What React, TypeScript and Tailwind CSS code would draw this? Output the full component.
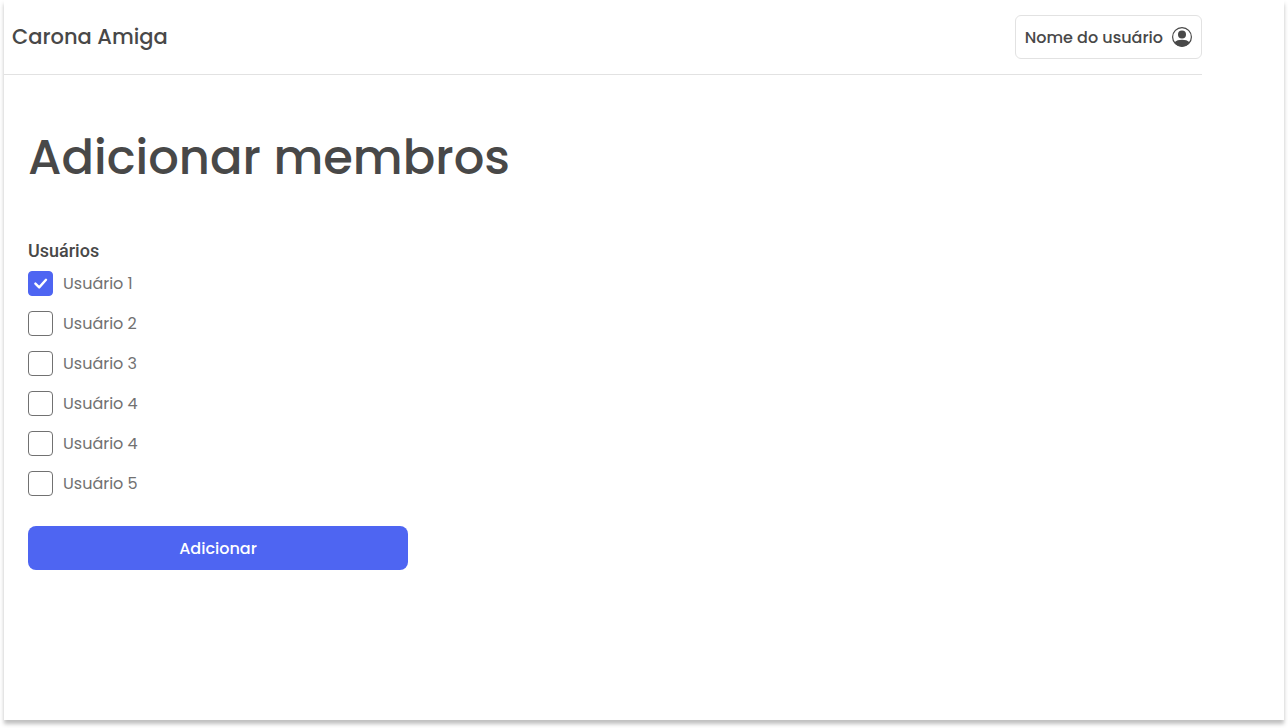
import { useState } from 'react';

const initialUsers = [
  { id: 'u1', name: 'Usuário 1', selected: true },
  { id: 'u2', name: 'Usuário 2', selected: false },
  { id: 'u3', name: 'Usuário 3', selected: false },
  { id: 'u4', name: 'Usuário 4', selected: false },
  { id: 'u5', name: 'Usuário 4', selected: false },
  { id: 'u6', name: 'Usuário 5', selected: false },
];

function UserIcon() {
  return (
    <svg viewBox="0 0 20 20" className="size-5 shrink-0" aria-hidden="true">
      <circle cx="10" cy="10" r="9.4" fill="none" stroke="currentColor" strokeWidth="1.2" />
      <circle cx="10" cy="7.5" r="4" fill="currentColor" />
      <path
        d="M2.4 15.4C4 13.5 7 12.8 10 12.8s6 .7 7.600 2.600C15.900 18 13.200 19.500 10 19.500S4.100 18 2.400 15.400Z"
        fill="currentColor"
      />
    </svg>
  );
}

function CheckMark() {
  return (
    <svg
      viewBox="0 0 25 25"
      className="pointer-events-none col-start-1 row-start-1 size-[25px] opacity-0 peer-checked:opacity-100"
      fill="none"
      stroke="white"
      strokeWidth="2.4"
      strokeLinecap="round"
      strokeLinejoin="round"
      aria-hidden="true"
    >
      <path d="M7.400 12.600 11.200 16.400 18 8.800" />
    </svg>
  );
}

function Header() {
  return (
    <header className="flex h-[75px] max-w-[1198px] items-center justify-between border-b border-[#e2e2e2] pl-2">
      <span className="text-[21px] leading-[34px] font-medium">Carona Amiga</span>
      <button
        type="button"
        className="flex h-11 items-center gap-[9px] rounded-md border border-[#e2e2e2] px-[9px] text-base leading-[25px] font-medium"
      >
        Nome do usuário
        <UserIcon />
      </button>
    </header>
  );
}

export default function App() {
  const [users, setUsers] = useState(initialUsers);

  const toggle = (id: string) =>
    setUsers((list) => list.map((u) => (u.id === id ? { ...u, selected: !u.selected } : u)));

  return (
    <div className="flex min-h-screen flex-col bg-white px-1 pb-2 font-[Poppins,Inter,sans-serif] text-[#484848]">
      <div className="grow bg-white shadow-[0_4px_4px_rgba(0,0,0,0.25)]">
        <Header />
        <main className="px-6 pt-12">
          <h1 className="text-5xl leading-[70px] font-medium">Adicionar membros</h1>
          <form onSubmit={(e) => e.preventDefault()} className="mt-[46px] max-w-[380px]">
            <fieldset>
              <legend className="mb-2 font-[Roboto,sans-serif] text-lg leading-6 font-medium">
                Usuários
              </legend>
              <div className="flex flex-col gap-[15px]">
                {users.map((u) => (
                  <div key={u.id} className="flex items-center gap-[10px]">
                    <span className="grid">
                      <input
                        id={u.id}
                        type="checkbox"
                        checked={u.selected}
                        onChange={() => toggle(u.id)}
                        className="peer col-start-1 row-start-1 size-[25px] appearance-none rounded border border-[#717171] bg-white checked:border-[#4e65f2] checked:bg-[#4e65f2]"
                      />
                      <CheckMark />
                    </span>
                    <label htmlFor={u.id} className="text-base leading-[25px] text-[#717171]">
                      {u.name}
                    </label>
                  </div>
                ))}
              </div>
            </fieldset>
            <button
              type="submit"
              className="mt-[30px] h-11 w-full rounded-lg bg-[#4e65f2] text-base leading-[25px] font-medium text-white"
            >
              Adicionar
            </button>
          </form>
        </main>
      </div>
    </div>
  );
}
